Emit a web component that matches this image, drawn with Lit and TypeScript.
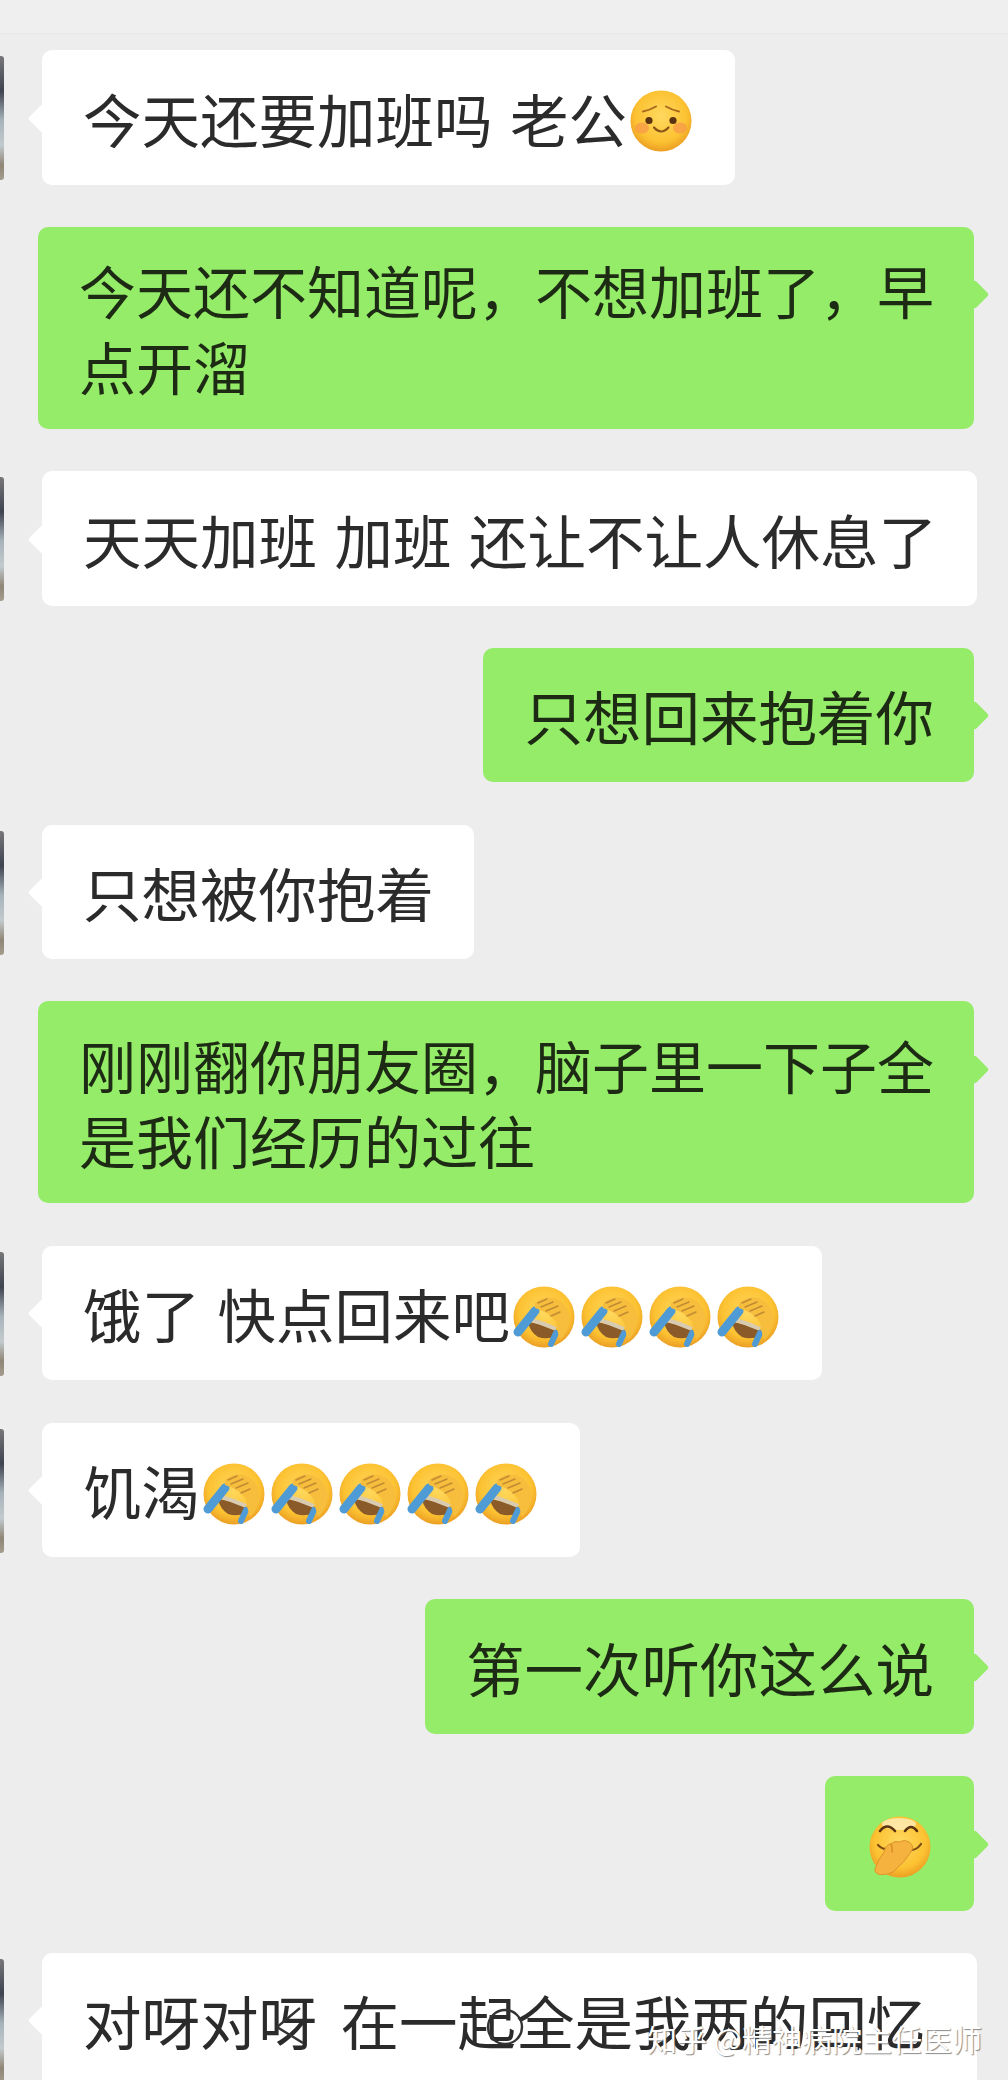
import {css, html, LitElement, svg} from "lit";
import {classMap} from "lit/directives/class-map.js";
import {customElement} from "lit/decorators.js";

type Face = "blush" | "cry" | "tease";

interface Message {
    mine: boolean;
    text?: string;
    faces?: Face[];
    // the two-line bubbles run a touch smaller, the last one is stretched
    tight?: boolean;
    full?: boolean;
}

const messages: Message[] = [
    {mine: false, text: "今天还要加班吗 老公", faces: ["blush"]},
    {mine: true, tight: true, text: "今天还不知道呢，不想加班了，早\n点开溜"},
    {mine: false, text: "天天加班 加班 还让不让人休息了"},
    {mine: true, text: "只想回来抱着你"},
    {mine: false, text: "只想被你抱着"},
    {mine: true, tight: true, text: "刚刚翻你朋友圈，脑子里一下子全\n是我们经历的过往"},
    {mine: false, text: "饿了 快点回来吧", faces: ["cry", "cry", "cry", "cry"]},
    {mine: false, text: "饥渴", faces: ["cry", "cry", "cry", "cry", "cry"]},
    {mine: true, text: "第一次听你这么说"},
    {mine: true, faces: ["tease"]},
    {mine: false, full: true, text: "对呀对呀 在一起全是我两的回忆"},
];

const faceArt = {
    blush: svg`
        <circle cx="31" cy="31" r="30.5" fill="url(#skin)"/>
        <ellipse cx="12" cy="38" rx="7" ry="5.5" fill="#f79a4a" opacity=".75"/>
        <ellipse cx="50" cy="38" rx="7" ry="5.5" fill="#f79a4a" opacity=".75"/>
        <circle cx="19" cy="30.5" r="3.6" fill="#5b3311"/>
        <circle cx="43" cy="30.5" r="3.6" fill="#5b3311"/>
        <path d="M13 21.5Q20 20 26 16.5M36 16.5Q42 20 49 21.5" fill="none" stroke="#a8691d" stroke-width="2" stroke-linecap="round"/>
        <path d="M24 37.5Q31 45.5 38.5 37.5" fill="none" stroke="#8a5416" stroke-width="2.2" stroke-linecap="round"/>`,
    cry: svg`
        <circle cx="31" cy="31" r="30.5" fill="url(#skin)"/>
        <path d="M15 36Q30 38 44 44L43 50Q34 54 25 51Q17 46 15 36Z" fill="#8a5a28"/>
        <path d="M15 33Q30 37 43 43" fill="none" stroke="#d9cbb0" stroke-width="4"/>
        <path d="M22 25L5 46" stroke="#4f9bd6" stroke-width="9" stroke-linecap="round"/>
        <path d="M43 47L38 58" stroke="#4f9bd6" stroke-width="6" stroke-linecap="round"/>
        <path d="M22 17Q30 10 42 12Q55 18 57 32Q56 46 47 54Q44 45 43 36Q36 26 22 22Z" fill="#f7bd3c"/>
        <path d="M25 17L34 13M28 21L40 16M33 25L45 20M38 30L47 26" stroke="#c08b34" stroke-width="1.4" stroke-linecap="round"/>`,
    tease: svg`
        <circle cx="31" cy="31" r="30.5" fill="url(#skin)"/>
        <ellipse cx="30" cy="8" rx="17" ry="6" fill="#fff3cf" opacity=".7"/>
        <path d="M11 15Q18 6 26 15M36 15Q42 7 48 15" fill="none" stroke="#5b3311" stroke-width="2.6" stroke-linecap="round"/>
        <path d="M9 29Q14 34 19 33M42 34Q48 34 52 28" fill="none" stroke="#7a4a14" stroke-width="2.2" stroke-linecap="round"/>
        <path d="M6 53Q10 42 15 36Q17 28 22 28Q26 24 30 26Q36 23 40 26Q46 30 42 36Q36 46 24 56Q14 60 9 58Q5 56 6 53Z" fill="#f6b23f" stroke="#dd932a" stroke-width="1"/>
        <path d="M22 28Q24 32 23 36" fill="none" stroke="#d98a22" stroke-width="1.4" stroke-linecap="round"/>`,
};

@customElement("app-root")
class AppRoot extends LitElement {
    static styles = css`
    :host {
        display: block;
    }

    .page {
        position: relative;
        width: 1008px;
        height: 2080px;
        overflow: hidden;
        background: #ededed;
        font-family: "Noto Sans CJK SC", "Noto Sans", sans-serif;
    }

    .defs {
        position: absolute;
        width: 0;
        height: 0;
    }

    .topbar {
        height: 33px;
        background: #efefef;
        border-bottom: 1px solid #e8e8e8;
    }

    .chat {
        display: flex;
        flex-direction: column;
        gap: 42.3px;
        padding-top: 16px;
    }

    .row {
        display: flex;
        align-items: flex-start;
    }

    .row.mine {
        justify-content: flex-end;
        padding-right: 34px;
    }

    .avatar {
        flex: none;
        width: 4px;
        height: 124px;
        margin: 6px 38px 0 0;
        border-radius: 0 3px 3px 0;
        background: linear-gradient(#77777a, #3f4450 28%, #a7b3bb 52%, #c2cacd 72%, #8f8676 88%, #a49c8e);
    }

    .bubble {
        position: relative;
        display: flex;
        align-items: center;
        box-sizing: border-box;
        min-height: 134.5px;
        padding: 25.5px 40px 25.5px 41px;
        border-radius: 10px;
        background: #ffffff;
        color: #2b2b2b;
        font-size: 58.5px;
        line-height: 75.5px;
        word-spacing: 4.4px;
    }

    .mine .bubble {
        background: #95ec69;
        color: #1d2b14;
    }

    .bubble.tight {
        font-size: 57px;
    }

    .bubble.full {
        width: 935px;
        word-spacing: 10.4px;
    }

    .bubble::before {
        content: "";
        position: absolute;
        top: 68px;
        left: -10px;
        width: 21px;
        height: 21px;
        margin-top: -10.5px;
        border-radius: 3px;
        background: inherit;
        transform: rotate(45deg);
    }

    .mine .bubble::before {
        left: auto;
        right: -11px;
    }

    .text {
        position: relative;
        white-space: pre;
        filter: blur(0.6px);
    }

    .face {
        position: relative;
        flex: none;
        width: 62px;
        height: 62px;
        margin: 8px 3px 0;
        filter: blur(0.4px);
    }

    .scrawl {
        position: absolute;
        left: 270px;
        top: 2000px;
        width: 260px;
        height: 60px;
        fill: none;
        stroke: #333333;
        stroke-width: 2.4;
        filter: blur(0.4px);
    }

    .mark {
        position: absolute;
        right: 26px;
        top: 2018px;
        color: #ffffff;
        font-size: 30px;
        line-height: 40px;
        white-space: nowrap;
        text-shadow: 1px 1px 1px rgba(90, 90, 90, .7);
    }
    `

    renderFace(face: Face) {
        return html`<svg class="face" viewBox="0 0 62 62">${faceArt[face]}</svg>`;
    }

    render() {
        return html`
            <div class="page">
                <svg class="defs">
                    <defs>
                        <radialGradient id="skin" cx=".5" cy=".42" r=".6">
                            <stop offset="0" stop-color="#ffd95f"/>
                            <stop offset=".7" stop-color="#fcc232"/>
                            <stop offset="1" stop-color="#e99a22"/>
                        </radialGradient>
                    </defs>
                </svg>
                <div class="topbar"></div>
                <div class="chat">
                    ${messages.map((m) => html`
                        <div class="row ${m.mine ? "mine" : ""}">
                            ${m.mine ? "" : html`<div class="avatar"></div>`}
                            <div class="bubble ${classMap({tight: !!m.tight, full: !!m.full})}">
                                ${m.text ? html`<span class="text">${m.text}</span>` : ""}
                                ${(m.faces ?? []).map((f) => this.renderFace(f))}
                            </div>
                        </div>
                    `)}
                </div>
                <svg class="scrawl" viewBox="0 0 260 60">
                    <path d="M30 8L7 27L33 43"/>
                    <circle cx="235" cy="27" r="17"/>
                </svg>
                <div class="mark">知乎 @精神病院主任医师</div>
            </div>
        `
    }
}
